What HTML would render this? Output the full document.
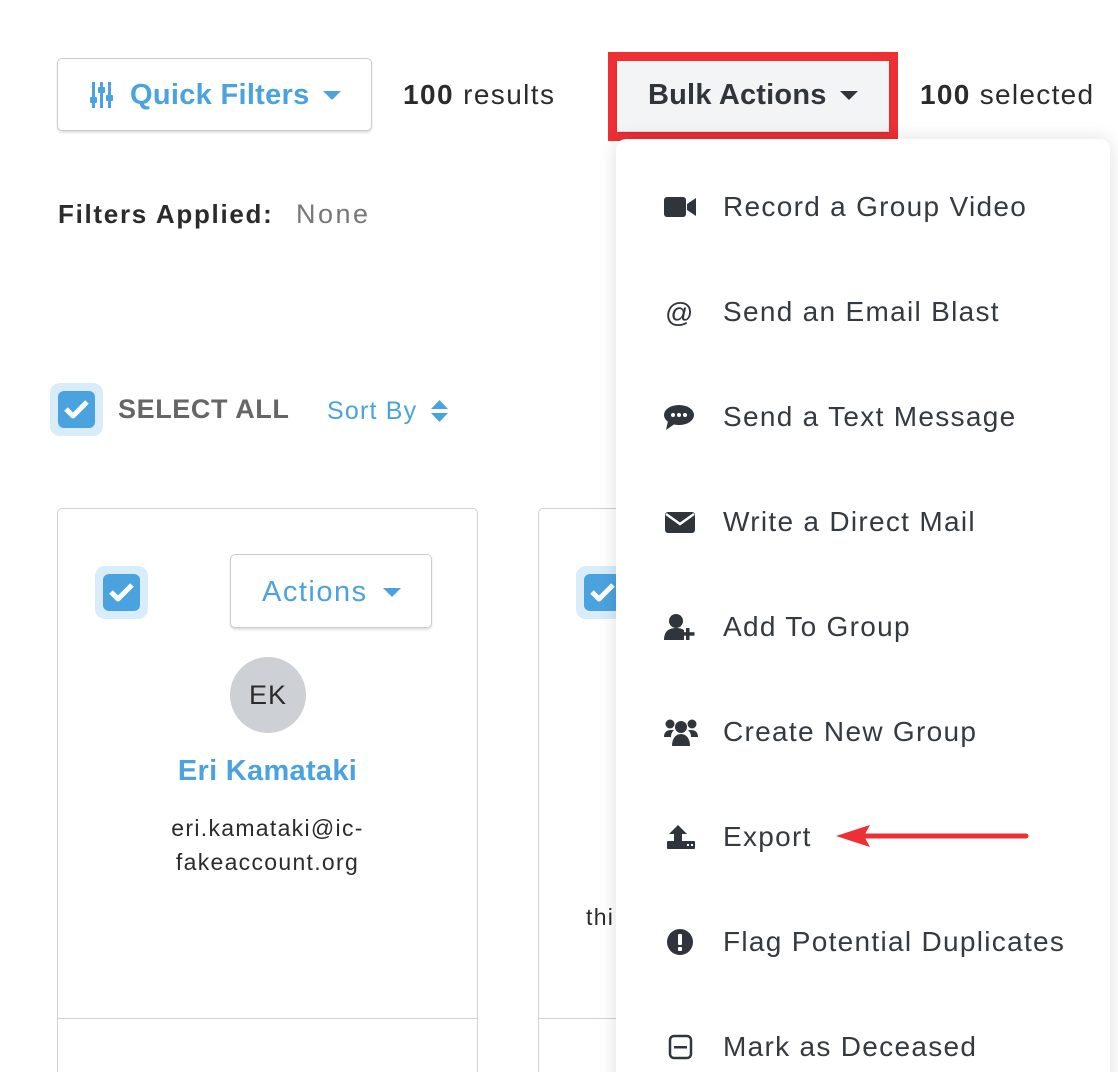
<!DOCTYPE html>
<html style="height:1072px;overflow:hidden"><head><meta charset="utf-8"><style>
*{box-sizing:border-box;margin:0;padding:0}
body{width:1118px;height:1072px;overflow:hidden;background:#fff;font-family:"Liberation Sans",sans-serif;color:#343a40;position:relative}
.abs{position:absolute}
.blue{color:#4aa3df}
.btn{position:absolute;border:1px solid #ccc;border-radius:5px;background:#fff;box-shadow:0 2px 2px rgba(0,0,0,.12)}
.caret{display:inline-block;width:0;height:0;border-left:9px solid transparent;border-right:9px solid transparent;border-top:9px solid currentColor}
.cb{position:absolute;width:53px;height:53px;border-radius:10px;background:#d8ecfa}
.cb i{position:absolute;left:8px;top:8px;width:37px;height:37px;border-radius:6px;background:#4aa3df}
.cb svg{position:absolute;left:13px;top:14px}
.menu{position:absolute;left:616px;top:139px;width:494px;height:960px;background:#fff;border-radius:10px;box-shadow:0 0 18px rgba(0,0,0,.13)}
.it{position:absolute;left:0;height:40px;width:494px;font-size:28px;line-height:40px;color:#343a40;letter-spacing:1.3px}
.it span{position:absolute;left:107px;white-space:nowrap}
.it svg{position:absolute;left:48px;top:6px}
</style></head><body>

<div class="btn" style="left:57px;top:58px;width:315px;height:73px"></div>
<svg class="abs" style="left:89px;top:82px" width="24" height="26" viewBox="0 0 24 26" fill="#4aa3df"><rect x="3" y="0" width="3" height="26"/><rect x="11" y="0" width="3" height="26"/><rect x="19" y="0" width="3" height="26"/><rect x="1" y="15" width="7" height="6" rx="1"/><rect x="9" y="5" width="7" height="6" rx="1"/><rect x="17" y="13" width="7" height="6" rx="1"/></svg>
<div class="abs blue" style="left:130px;top:76px;font-size:29px;font-weight:bold;line-height:38px;letter-spacing:0.3px">Quick Filters</div>
<span class="abs caret blue" style="left:323px;top:91px"></span>
<div class="abs" style="left:403px;top:76px;font-size:28px;line-height:38px;color:#2b2b2b;letter-spacing:1.4px"><b>100</b> results</div>

<div class="abs" style="left:608px;top:52px;width:290px;height:89px;border:9px solid #ee2f33"></div>
<div class="abs" style="left:617px;top:61px;width:272px;height:70px;background:#f3f4f6;border-radius:3px;box-shadow:0 2px 2px rgba(0,0,0,.15)"></div>
<div class="abs" style="left:648px;top:76px;font-size:29px;font-weight:bold;line-height:38px;color:#2f353b;letter-spacing:0.2px">Bulk Actions</div>
<span class="abs caret" style="left:840px;top:91px;color:#2f353b"></span>
<div class="abs" style="left:920px;top:76px;font-size:28px;line-height:38px;color:#2b2b2b;letter-spacing:1.3px"><b>100</b> selected</div>

<div class="abs" style="left:58px;top:196px;font-size:26px;font-weight:bold;line-height:36px;color:#2b2b2b;letter-spacing:1.7px">Filters Applied:</div>
<div class="abs" style="left:296px;top:196px;font-size:27px;line-height:36px;color:#777;letter-spacing:2.5px">None</div>

<div class="cb" style="left:50px;top:383px"><i></i><svg width="27" height="24" viewBox="0 0 27 24"><path d="M3 12l7 7L24 5" stroke="#fff" stroke-width="5" fill="none" stroke-linejoin="round"/></svg></div>
<div class="abs" style="left:118px;top:390px;font-size:27px;font-weight:bold;line-height:38px;color:#666;letter-spacing:0.6px">SELECT ALL</div>
<div class="abs blue" style="left:327px;top:393px;font-size:25px;line-height:36px;letter-spacing:1.2px">Sort By</div>
<svg class="abs" style="left:431px;top:400px" width="17" height="22" viewBox="0 0 17 22" fill="#4aa3df"><path d="M8.5 0L17 9H0z"/><path d="M8.5 22L17 13H0z"/></svg>

<div class="abs" style="left:57px;top:508px;width:421px;height:600px;border:1px solid #d0d0d0;border-radius:5px"></div>
<div class="abs" style="left:57px;top:1018px;width:421px;height:1px;background:#d0d0d0"></div>
<div class="cb" style="left:95px;top:566px"><i></i><svg width="27" height="24" viewBox="0 0 27 24"><path d="M3 12l7 7L24 5" stroke="#fff" stroke-width="5" fill="none" stroke-linejoin="round"/></svg></div>
<div class="btn" style="left:230px;top:554px;width:202px;height:74px"></div>
<div class="abs blue" style="left:262px;top:573px;font-size:29px;line-height:38px;letter-spacing:1.5px">Actions</div>
<span class="abs caret blue" style="left:383px;top:588px"></span>
<div class="abs" style="left:230px;top:657px;width:76px;height:76px;border-radius:50%;background:#cdd0d4;text-align:center;line-height:76px;font-size:27px;color:#2b2b2b;letter-spacing:1px">EK</div>
<div class="abs blue" style="left:57px;top:752px;width:421px;text-align:center;font-size:29px;font-weight:bold;line-height:38px;letter-spacing:0.3px">Eri Kamataki</div>
<div class="abs" style="left:57px;top:811px;width:421px;text-align:center;font-size:23px;line-height:34px;color:#2b2b2b;letter-spacing:1.3px">eri.kamataki@ic-<br>fakeaccount.org</div>

<div class="abs" style="left:538px;top:508px;width:200px;height:600px;border:1px solid #d0d0d0;border-radius:5px"></div>
<div class="abs" style="left:538px;top:1018px;width:200px;height:1px;background:#d0d0d0"></div>
<div class="cb" style="left:576px;top:566px"><i></i><svg width="27" height="24" viewBox="0 0 27 24"><path d="M3 12l7 7L24 5" stroke="#fff" stroke-width="5" fill="none" stroke-linejoin="round"/></svg></div>
<div class="abs" style="left:586px;top:900px;font-size:23px;line-height:34px;color:#2b2b2b;letter-spacing:1.3px">thi</div>

<div class="menu">
 <div class="it" style="top:48px"><svg width="32" height="28" viewBox="0 0 32 28" fill="#2f353b"><rect x="0" y="4" width="22" height="20" rx="3"/><path d="M23 11l9-6v18l-9-6z"/></svg><span>Record a Group Video</span></div>
 <div class="it" style="top:153px"><svg width="32" height="28" viewBox="0 0 32 28"><text x="1" y="24" font-size="28" font-family="Liberation Sans" fill="#2f353b">@</text></svg><span>Send an Email Blast</span></div>
 <div class="it" style="top:258px"><svg width="32" height="28" viewBox="0 0 32 28" fill="#2f353b"><ellipse cx="15" cy="12" rx="15" ry="10"/><path d="M4 18L2 27 12 20z"/><circle cx="9" cy="12" r="2" fill="#fff"/><circle cx="15" cy="12" r="2" fill="#fff"/><circle cx="21" cy="12" r="2" fill="#fff"/></svg><span>Send a Text Message</span></div>
 <div class="it" style="top:363px"><svg width="32" height="28" viewBox="0 0 32 28" fill="#2f353b"><rect x="1" y="4" width="30" height="21" rx="3"/><path d="M2 6l14 10L30 6" stroke="#fff" stroke-width="2.5" fill="none"/></svg><span>Write a Direct Mail</span></div>
 <div class="it" style="top:468px"><svg width="34" height="28" viewBox="0 0 34 28" fill="#2f353b"><circle cx="12" cy="8" r="7"/><path d="M0 27c0-8 4-12 12-12 4 0 6 1 8 2v10z"/><rect x="22" y="13" width="4" height="14" fill="#fff"/><rect x="22" y="15" width="3.5" height="12"/><rect x="17.5" y="19.2" width="13" height="3.5"/></svg><span>Add To Group</span></div>
 <div class="it" style="top:573px"><svg width="34" height="28" viewBox="0 0 34 28" fill="#2f353b"><circle cx="6" cy="6" r="4.5"/><circle cx="28" cy="6" r="4.5"/><circle cx="17" cy="9" r="6"/><path d="M0 19c0-5 3-7 7-7h3c-2 2-3 4-3 7z"/><path d="M34 19c0-5-3-7-7-7h-3c2 2 3 4 3 7z"/><path d="M8 28c0-8 4-12 9-12s9 4 9 12z"/></svg><span>Create New Group</span></div>
 <div class="it" style="top:678px"><svg width="32" height="28" viewBox="0 0 32 28" fill="#2f353b"><path d="M14 2L23 11h-5v8h-8v-8H5z"/><rect x="3" y="18" width="28" height="8" rx="1"/><rect x="23" y="21" width="2" height="2" fill="#fff"/><rect x="27" y="21" width="2" height="2" fill="#fff"/></svg><span>Export</span></div>
 <div class="it" style="top:783px"><svg width="32" height="28" viewBox="0 0 32 28"><circle cx="16" cy="14" r="13" fill="#2f353b"/><rect x="14" y="6" width="4" height="11" rx="1" fill="#fff"/><rect x="14" y="19" width="4" height="4" rx="1" fill="#fff"/></svg><span>Flag Potential Duplicates</span></div>
 <div class="it" style="top:888px"><svg width="32" height="28" viewBox="0 0 32 28"><rect x="6" y="3" width="21" height="22" rx="4" fill="none" stroke="#2f353b" stroke-width="2.5"/><rect x="10" y="13" width="13" height="2.5" fill="#2f353b"/></svg><span>Mark as Deceased</span></div>
</div>

<svg class="abs" style="left:834px;top:822px" width="200" height="30" viewBox="0 0 200 30"><path d="M30 14H192" stroke="#ee2f33" stroke-width="5" stroke-linecap="round"/><path d="M2 14L36 3 30 14 36 25z" fill="#ee2f33"/></svg>
</body></html>
